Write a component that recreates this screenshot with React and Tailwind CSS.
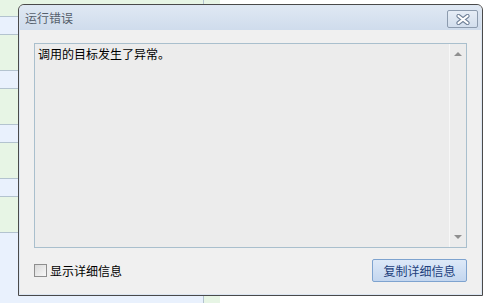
import React from "react";

const font = { fontFamily: '"Noto Sans CJK SC", "Liberation Sans", sans-serif' };

// rows of the sheet behind the dialog
const rows = [
  ["g", 17], ["b", 18], ["g", 36], ["b", 18], ["g", 36], ["b", 18], ["g", 36], ["b", 18], ["g", 36],
];

const Sheet = () => (
  <div className="flex h-full">
    <div className="w-[204px] flex flex-col border-r border-[#b3c3cf]">
      {rows.map(([c, h], i) => (
        <div
          key={i}
          className={`border-b border-[#b3c3cf] ${c === "g" ? "bg-[#e7f5e5]" : "bg-[#e9f1fd]"}`}
          style={{ height: h }}
        />
      ))}
      <div className="flex-1 bg-[#e9f1fd]" />
    </div>
    <div className="w-[16px] bg-[#e7f5e5]" />
    <div className="flex-1 bg-white" />
  </div>
);

const CloseIcon = () => (
  <svg width="16" height="11" viewBox="0 0 16 11">
    <path
      d="M3.5 2 L12.5 9 M12.5 2 L3.5 9"
      fill="none"
      stroke="#72839a"
      strokeWidth="4.2"
      strokeLinecap="round"
    />
    <path d="M3.5 2 L12.5 9 M12.5 2 L3.5 9" fill="none" stroke="#fff" strokeWidth="2.2" strokeLinecap="round" />
  </svg>
);

export default function App() {
  return (
    <div className="relative w-[490px] h-[303px] overflow-hidden" style={font}>
      <Sheet />

      {/* dialog window */}
      <div className="absolute left-[18px] top-[4px] w-[465px] h-[292px] border border-[#4a4a4a] rounded-t-[6px] bg-[#f0f0f0] flex flex-col overflow-hidden">
        <div className="flex-1 flex flex-col border border-[#dce6f2] rounded-t-[5px]">
          {/* title bar */}
          <div className="h-[24px] flex items-center justify-between pl-[5px] pr-[3px] bg-gradient-to-b from-[#dfe8f3] to-[#cfdcec]">
            <span className="text-[12px] text-[#56606c] leading-none">运行错误</span>
            <div className="w-[31px] h-[18px] mt-[2px] border border-[#8c9bae] rounded-[2px] bg-gradient-to-b from-[#e6edf6] to-[#d2deed] flex items-center justify-center">
              <CloseIcon />
            </div>
          </div>

          {/* body */}
          <div className="flex-1 flex flex-col px-[14px] pt-[13px] pb-[12px]">
            <div className="h-[205px] flex border border-[#a9bfcd] bg-[#ececec]">
              <div className="flex-1 px-[3px] pt-[3px] text-[12px] leading-[14px] text-black">
                调用的目标发生了异常。
              </div>
              <div className="w-[17px] flex flex-col items-center justify-between border-l border-[#f7f7f7] py-[8px]">
                <div className="w-0 h-0 border-x-[4px] border-x-transparent border-b-[4px] border-b-[#8f8f8f]" />
                <div className="w-0 h-0 border-x-[4px] border-x-transparent border-t-[4px] border-t-[#8f8f8f]" />
              </div>
            </div>

            <div className="mt-auto flex items-center justify-between">
              <label className="flex items-center gap-[3px] text-[12px] text-black">
                <span className="w-[13px] h-[13px] border border-[#8e8e8e] bg-gradient-to-br from-[#d9d9d9] to-[#f8f8f8] box-border" />
                显示详细信息
              </label>
              <button className="w-[95px] h-[23px] border border-[#7ea3cf] rounded-[2px] bg-gradient-to-b from-[#dde9f8] to-[#c3d6ef] text-[12px] text-[#1d3f7c] leading-none">
                复制详细信息
              </button>
            </div>
          </div>
        </div>
      </div>
    </div>
  );
}
